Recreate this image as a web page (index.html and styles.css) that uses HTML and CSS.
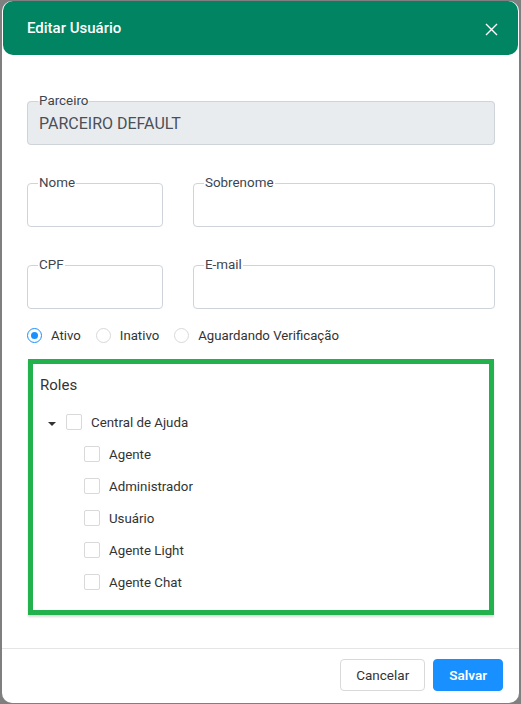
FILE: index.html
```html
<!DOCTYPE html>
<html lang="pt-BR">
<head>
  <meta charset="UTF-8">
  <title>Editar Usuário</title>
  <link rel="stylesheet" href="styles.css">
</head>
<body>

<div class="modal">
  <div class="modal-header">
    <span class="modal-title">Editar Usuário</span>
    <button class="close-btn" aria-label="Fechar">
      <svg width="13" height="13" viewBox="0 0 13 13"><path d="M1 1 L12 12 M12 1 L1 12" stroke="#fff" stroke-width="1.4" fill="none"/></svg>
    </button>
  </div>

  <div class="modal-body">
    <fieldset class="field disabled">
      <legend>Parceiro</legend>
      <div class="field-value">PARCEIRO DEFAULT</div>
    </fieldset>

    <div class="row">
      <fieldset class="field">
        <legend>Nome</legend>
        <div class="field-value"></div>
      </fieldset>
      <fieldset class="field">
        <legend>Sobrenome</legend>
        <div class="field-value"></div>
      </fieldset>
    </div>

    <div class="row">
      <fieldset class="field">
        <legend>CPF</legend>
        <div class="field-value"></div>
      </fieldset>
      <fieldset class="field">
        <legend>E-mail</legend>
        <div class="field-value"></div>
      </fieldset>
    </div>

    <div class="radios">
      <label class="radio"><span class="radio-dot checked"></span>Ativo</label>
      <label class="radio"><span class="radio-dot"></span>Inativo</label>
      <label class="radio"><span class="radio-dot"></span>Aguardando Verificação</label>
    </div>

    <div class="roles">
      <div class="roles-title">Roles</div>
      <div class="tree-node">
        <span class="caret"></span>
        <span class="check"></span>
        <span>Central de Ajuda</span>
      </div>
      <div class="tree-children">
        <div class="tree-node"><span class="check"></span><span>Agente</span></div>
        <div class="tree-node"><span class="check"></span><span>Administrador</span></div>
        <div class="tree-node"><span class="check"></span><span>Usuário</span></div>
        <div class="tree-node"><span class="check"></span><span>Agente Light</span></div>
        <div class="tree-node"><span class="check"></span><span>Agente Chat</span></div>
      </div>
    </div>
  </div>

  <div class="modal-footer">
    <button class="btn">Cancelar</button>
    <button class="btn primary">Salvar</button>
  </div>
</div>

</body>
</html>
```

FILE: styles.css
```css
html, body { height: 100%; }
body {
  margin: 0;
  background: #7f7f7f;
  font-family: Roboto, "Noto Sans", sans-serif;
  color: #333;
  overflow: hidden;
}
.modal {
  margin: 1px 2px 1px 2px;
  height: 702px;
  background: #fff;
  border-radius: 10px;
  display: flex;
  flex-direction: column;
}
.modal-header {
  height: 54px;
  margin: 0 1px;
  background: #008461;
  border-radius: 10px;
  display: flex;
  align-items: center;
  justify-content: space-between;
  padding: 0 20px 0 24px;
}
.modal-title { color: #fff; font-size: 15px; font-weight: 500; }
.close-btn {
  background: none;
  border: none;
  padding: 0;
  margin-top: 3px;
  cursor: pointer;
  display: flex;
}

.modal-body { padding: 38px 24px 0 25px; }

.field {
  margin: 0;
  padding: 0 11px;
  border: 1px solid #ced4da;
  border-radius: 4px;
  min-width: 0;
}
.field legend {
  font-size: 13.4px;
  line-height: 16px;
  padding: 0 1px;
  color: #3d4550;
  margin-left: -1px;
}
.field-value {
  height: 35px;
  line-height: 30px;
  font-size: 16px;
  color: #495057;
}
.field.disabled { background: #e9ecef; }

.row {
  display: grid;
  grid-template-columns: 136px 1fr;
  gap: 30px;
  margin-top: 30px;
}

.radios {
  display: flex;
  align-items: center;
  gap: 15px;
  margin-top: 19px;
  font-size: 13.2px;
}
.radio { display: flex; align-items: center; gap: 9px; }
.radio-dot {
  width: 13px;
  height: 13px;
  border: 1px solid #d9d9d9;
  border-radius: 50%;
  position: relative;
}
.radio-dot.checked { border-color: #1890ff; }
.radio-dot.checked::after {
  content: "";
  position: absolute;
  left: 3px;
  top: 3px;
  width: 7px;
  height: 7px;
  border-radius: 50%;
  background: #1890ff;
}

.roles {
  margin: 16px 1px 0 1px;
  border: 5px solid #22b14c;
  box-shadow: 0 2px 2px rgba(0, 0, 0, 0.15);
  padding: 10px 7px 12px 7px;
  font-size: 13.3px;
}
.roles-title { font-size: 15px; height: 22px; line-height: 22px; margin-bottom: 10px; }
.tree-node {
  display: flex;
  align-items: center;
  height: 32px;
}
.caret {
  width: 0;
  height: 0;
  border-left: 4px solid transparent;
  border-right: 4px solid transparent;
  border-top: 4px solid #333;
  margin: 3px 10px 0 8px;
}
.check {
  width: 14px;
  height: 14px;
  border: 1px solid #d9d9d9;
  border-radius: 2px;
  margin-right: 9px;
}
.tree-children { padding-left: 44px; }

.modal-footer {
  margin-top: auto;
  border-top: 1px solid #e5e5e5;
  display: flex;
  justify-content: flex-end;
  gap: 8px;
  padding: 10px 16px 12px 0;
}
.btn {
  height: 32px;
  padding: 0 15px;
  font-family: inherit;
  font-size: 13.5px;
  color: #333;
  background: #fff;
  border: 1px solid #d9d9d9;
  border-radius: 4px;
}
.btn.primary {
  background: #1890ff;
  border-color: #1890ff;
  color: #fff;
  font-weight: 600;
}
```
